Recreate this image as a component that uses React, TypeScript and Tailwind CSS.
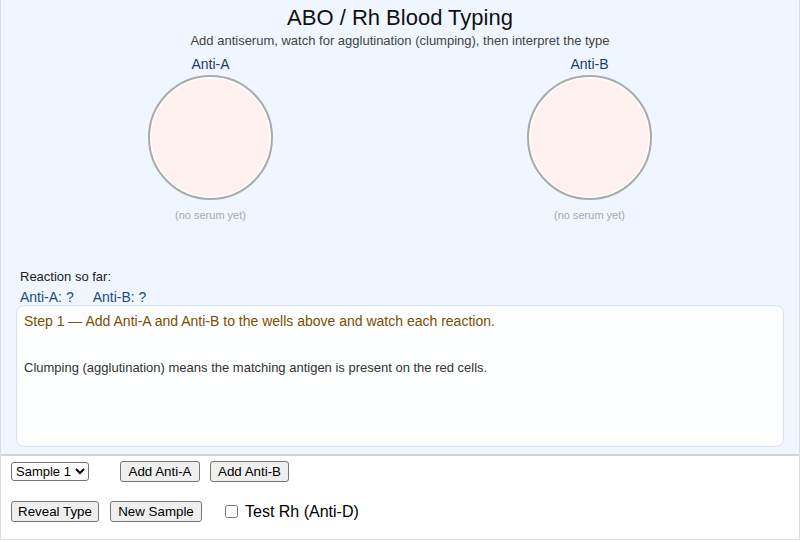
import React, { useState } from 'react';

const Well: React.FC<{ label: string }> = ({ label }) => (
  <div className="flex flex-col items-center">
    <div className="text-[14px] leading-[16px] text-[#1e3a6e]">{label}</div>
    <div className="mt-[3px] h-[125px] w-[125px] rounded-full border-2 border-[#aaaaaa] bg-[#fff1f0] shadow-[inset_0_0_0_1.5px_#ffffff]" />
    <div className="mt-[9px] text-[11px] leading-[13px] text-[#aaaaaa]">(no serum yet)</div>
  </div>
);

const btn =
  'h-[21px] whitespace-nowrap rounded-[3px] border border-[#767676] bg-[#efefef] px-[4px] text-[13.33px] leading-[15px] text-black';

export default function App() {
  const [sample, setSample] = useState('1');
  const [rh, setRh] = useState(false);

  return (
    <div className="flex h-[540px] w-[800px] flex-col border-x border-b border-[#dddddd] font-['Liberation_Sans',Arial,sans-serif]">
      <div className="flex h-[456px] flex-col border-b-2 border-[#d4d4d4] bg-[#eff6ff] pt-[5px]">
        <h1 className="text-center text-[22px] leading-[26px] text-[#111111]">ABO / Rh Blood Typing</h1>
        <p className="mt-[2px] text-center text-[13px] leading-[16px] text-[#444444]">
          Add antiserum, watch for agglutination (clumping), then interpret the type
        </p>

        <div className="mt-[7px] grid grid-cols-2 px-5">
          <Well label="Anti-A" />
          <Well label="Anti-B" />
        </div>

        <div className="mt-[47px] pl-[19px] text-[13px] leading-[15px] text-[#222222]">Reaction so far:</div>
        <div className="mt-[5px] flex gap-[19px] pl-[19px] text-[14px] leading-[16px] text-[#1e4a80]">
          <span>Anti-A: ?</span>
          <span>Anti-B: ?</span>
        </div>

        <div className="mx-[15px] h-[142px] rounded-lg border border-[#d6e2f0] bg-[#fdfeff] px-[7px] pt-[7px]">
          <div className="text-[14px] leading-[16px] text-[#7a4f00]">
            Step 1 — Add Anti-A and Anti-B to the wells above and watch each reaction.
          </div>
          <div className="mt-[31px] text-[13px] leading-[15px] text-[#333333]">
            Clumping (agglutination) means the matching antigen is present on the red cells.
          </div>
        </div>
      </div>

      <div className="flex flex-col bg-white pl-[10px] pt-[5px]">
        <div className="flex items-start">
          <select
            value={sample}
            onChange={(e) => setSample(e.target.value)}
            className="mt-[1px] h-[19px] w-[78px] rounded-[3px] border border-[#767676] bg-white pl-0 text-[13px] leading-[15px] text-black"
          >
            <option value="1">Sample 1</option>
            <option value="2">Sample 2</option>
            <option value="3">Sample 3</option>
          </select>
          <button className={btn + ' ml-[31px] w-[80px]'}>Add Anti-A</button>
          <button className={btn + ' ml-[10px] w-[79px]'}>Add Anti-B</button>
        </div>

        <div className="mt-[19px] flex items-center">
          <button className={btn + ' w-[88px]'}>Reveal Type</button>
          <button className={btn + ' ml-[11px] w-[92px]'}>New Sample</button>
          <label className="ml-[23px] flex items-center text-[16px] leading-[18px] text-black">
            <input type="checkbox" checked={rh} onChange={(e) => setRh(e.target.checked)} className="m-0 h-[13px] w-[13px]" />
            <span className="ml-[7px]">Test Rh (Anti-D)</span>
          </label>
        </div>
      </div>
    </div>
  );
}
